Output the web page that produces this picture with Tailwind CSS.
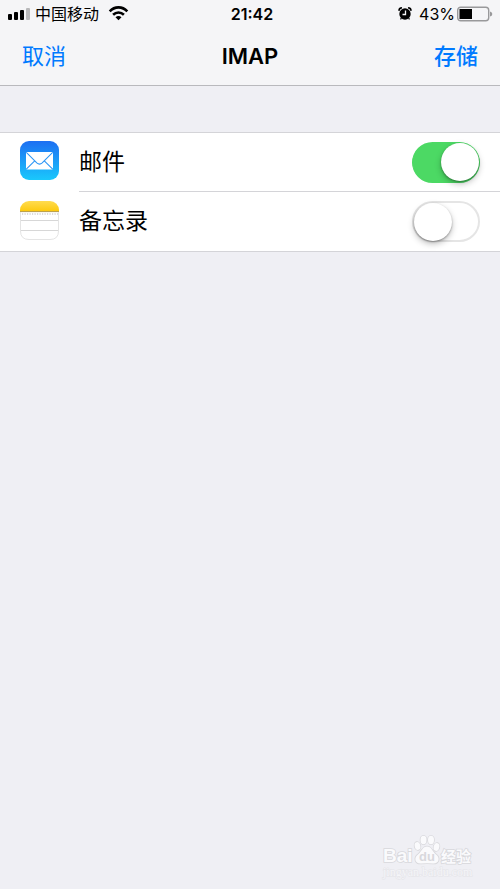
<!DOCTYPE html>
<html lang="zh-CN">
<head>
<meta charset="utf-8">
<meta name="viewport" content="width=device-width, initial-scale=1">
<title>IMAP</title>
<script src="https://cdn.jsdelivr.net/npm/@tailwindcss/browser@4"></script>
</head>
<body class="flex min-h-screen flex-col bg-[#efeff4] font-[Inter,'Noto_Sans_CJK_SC',sans-serif] text-black">
<header class="border-b border-[#b9b9bd] bg-[#f5f5f7]">
  <div class="grid h-7 grid-cols-3 items-center px-2 text-base leading-7">
    <div class="flex items-center">
      <svg class="mr-1 h-3 w-6 shrink-0" viewBox="0 0 24 12" aria-hidden="true">
        <rect x="0" y="6" width="4" height="6" rx="1"/><rect x="6" y="4" width="4" height="8" rx="1"/><rect x="12" y="2" width="4" height="10" rx="1"/><rect x="18" y="0" width="4" height="12" rx="1" fill="#b8b8ba"/>
      </svg>
      <span class="-ml-px whitespace-nowrap">中国移动</span>
      <svg class="ml-2 h-4 w-6 shrink-0" viewBox="-2 0 24 16" fill="none" stroke="#000" stroke-width="2.6" aria-hidden="true">
        <path d="M.7 5.3C5.7.1 13.3.1 18.3 5.3"/><path d="M4.1 8.8C7.2 5.8 11.8 5.8 14.9 8.8"/><path d="M9.5 14.2 6.5 11.2Q9.5 8.6 12.5 11.2Z" fill="#000" stroke="none"/>
      </svg>
    </div>
    <time class="pl-1 text-center font-semibold">21:42</time>
    <div class="flex items-center justify-end">
      <svg class="mr-1.5 h-4 w-4 shrink-0" viewBox="0 0 16 16" aria-hidden="true">
        <circle cx="8" cy="8" r="5.7"/><path d="M2.1 4Q2.2 2.2 4.2 1.9M13.9 4Q13.8 2.2 11.8 1.9" fill="none" stroke="#000" stroke-width="1.8" stroke-linecap="round"/><path d="M4.4 12.2 3.5 13.4M11.6 12.2l.9 1.2" stroke="#000" stroke-width="1.2"/><path d="M8.5 4.5V8.5H5.5" fill="none" stroke="#f5f5f7" stroke-width="1.3"/>
      </svg>
      <span>43%</span>
      <svg class="-mr-px ml-0.5 h-4 w-9 shrink-0" viewBox="0 0 36 16" aria-hidden="true">
        <rect x="0.7" y="1.2" width="31" height="13.6" rx="3" fill="none" stroke="#99999b" stroke-width="1.4"/><rect x="2.5" y="3" width="12.5" height="10"/><path d="M33 5.5Q35.3 6 35.3 8T33 10.5Z" fill="#99999b"/>
      </svg>
    </div>
  </div>
  <nav class="grid h-[57px] grid-cols-3 items-center px-[22px] text-[22px]">
    <button type="button" class="justify-self-start text-[#007aff]">取消</button>
    <h1 class="text-center font-semibold">IMAP</h1>
    <button type="button" class="justify-self-end font-medium text-[#007aff]">存储</button>
  </nav>
</header>
<main class="mt-[46px] border-y border-[#d4d4d8] bg-white text-[23px]">
  <div class="flex h-[58px] items-start pl-5">
    <svg class="mt-2 mr-5 h-[39px] w-[39px] shrink-0" viewBox="0 0 39 39" aria-hidden="true">
      <defs><linearGradient id="mail" x2="0" y2="1"><stop stop-color="#1d6ff2"/><stop offset="1" stop-color="#1ac8fc"/></linearGradient></defs>
      <rect width="39" height="39" rx="9" fill="url(#mail)"/>
      <rect x="6" y="11" width="27" height="17.5" rx="1" fill="#fff"/>
      <path d="M6.3 11.3 16.8 21.8Q19.5 24.3 22.2 21.8L32.7 11.3M6.3 28.2 14.7 19.8M32.7 28.2 24.3 19.8" fill="none" stroke="#2c96f5" stroke-width="1.1"/>
    </svg>
    <div class="flex h-full flex-1 items-center justify-between pr-5">
      <label for="mail-switch">邮件</label>
      <input id="mail-switch" type="checkbox" role="switch" checked class="flex h-[41px] w-[68px] appearance-none items-center rounded-full border-2 border-[#e5e5e5] bg-white before:h-[38px] before:w-[38px] before:shrink-0 before:rounded-full before:bg-white before:shadow-[0_3px_6px_rgba(0,0,0,0.25),0_1px_2px_rgba(0,0,0,0.3)] checked:justify-end checked:border-x-1 checked:border-[#4cd964] checked:bg-[#4cd964]">
    </div>
  </div>
  <div class="flex h-[60px] items-start pl-5">
    <svg class="mt-2.5 mr-5 h-[39px] w-[39px] shrink-0" viewBox="0 0 39 39" aria-hidden="true">
      <defs><linearGradient id="notes" x2="0" y2="1"><stop stop-color="#ffdc50"/><stop offset="1" stop-color="#fdc90c"/></linearGradient><clipPath id="tile"><rect width="39" height="39" rx="9"/></clipPath></defs>
      <g clip-path="url(#tile)"><rect width="39" height="39" fill="#fff"/><rect width="39" height="10.5" fill="url(#notes)"/><path d="M0 10.6H39" stroke="#b59a48"/><path d="M2 13H38" stroke="#cfcfcf" stroke-width="1.6" stroke-dasharray="1.2 1.3"/><path d="M0 19.5H39M0 29.5H39" stroke="#d7d7d7"/></g>
      <path d="M.5 11V30Q.5 38.5 9 38.5H30Q38.5 38.5 38.5 30V11" fill="none" stroke="#e4e4e4"/>
    </svg>
    <div class="flex h-full flex-1 items-center justify-between border-t border-[#d4d4d8] pr-5">
      <label for="notes-switch">备忘录</label>
      <input id="notes-switch" type="checkbox" role="switch" class="flex h-[41px] w-[68px] appearance-none items-center rounded-full border-2 border-[#e5e5e5] bg-white before:h-[38px] before:w-[38px] before:shrink-0 before:rounded-full before:bg-white before:shadow-[0_3px_6px_rgba(0,0,0,0.25),0_1px_2px_rgba(0,0,0,0.3)] checked:justify-end checked:border-[#4cd964] checked:bg-[#4cd964]">
    </div>
  </div>
</main>
<footer class="mt-auto flex justify-end pr-6 pb-2">
  <svg class="h-12 w-24" viewBox="0 0 96 48" font-family="'Liberation Sans','Noto Sans CJK SC',sans-serif" fill="#fafafc" stroke="#d8d8dc" stroke-width="1.6" paint-order="stroke" role="img" aria-label="Baidu 经验 jingyan.baidu.com">
    <text x="3" y="29" font-size="19" font-weight="bold">Bai</text>
    <ellipse cx="37.5" cy="13" rx="2.8" ry="4" transform="rotate(-15 37.5 13)"/><ellipse cx="43.5" cy="7" rx="3" ry="4.2"/><ellipse cx="51" cy="7" rx="3" ry="4.2"/><ellipse cx="56.5" cy="14" rx="2.8" ry="4" transform="rotate(15 56.5 14)"/>
    <path d="M47 13.5C42.5 13.5 42 18 38 21.5C33.5 25 35 31 41 30.5Q47 29.8 53 30.5C59 31 60.5 25 56 21.5C52 18 51.5 13.5 47 13.5Z"/>
    <text x="39" y="28" font-size="13" font-weight="bold" fill="#d8d8dc" stroke="none">du</text>
    <text x="61" y="29" font-size="15" font-weight="bold">经验</text>
    <text x="3" y="43" font-size="12" font-family="'Liberation Serif',serif" fill="#f5f5f8" stroke="#e4e4e8" stroke-width="1">jingyan.baidu.com</text>
  </svg>
</footer>
</body>
</html>
